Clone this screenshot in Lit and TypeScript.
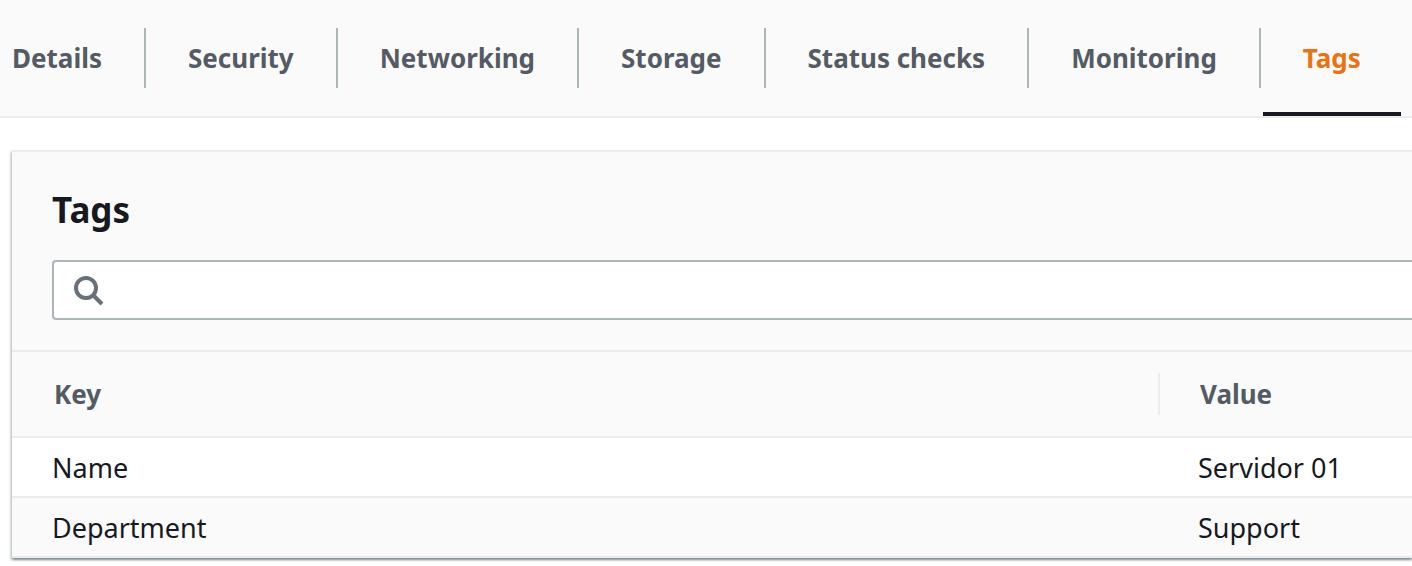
import { LitElement, html, css } from "lit";
import { customElement, state } from "lit/decorators.js";
import { classMap } from "lit/directives/class-map.js";

interface Tag {
  key: string;
  value: string;
}

const TABS = ["Details", "Security", "Networking", "Storage", "Status checks", "Monitoring", "Tags"];

const TAGS: Tag[] = [
  { key: "Name", value: "Servidor 01" },
  { key: "Department", value: "Support" },
];

@customElement("tag-table")
export class TagTable extends LitElement {
  @state() private query = "";

  static styles = css`
    :host {
      display: block;
      background: #fafafa;
      border-top: 2px solid #eaeded;
      box-shadow:
        0 2px 2px 0 rgba(0, 28, 36, 0.3),
        2px 2px 2px 0 rgba(0, 28, 36, 0.15),
        -2px 2px 2px 0 rgba(0, 28, 36, 0.15);
    }
    .header {
      padding: 34px 0 30px 40px;
    }
    .title {
      margin: 0 0 26px;
      font-size: 35px;
      line-height: 48px;
      font-weight: 700;
    }
    .search {
      display: flex;
      align-items: center;
      gap: 16px;
      height: 54px;
      padding: 2px 0 0 20px;
      border: 2px solid #aab7b8;
      border-right: 0;
      border-radius: 4px 0 0 4px;
      background: #fff;
    }
    .icon {
      flex: none;
      width: 30px;
      height: 30px;
      fill: none;
      stroke: #687078;
      stroke-width: 4;
    }
    .input {
      flex: 1;
      min-width: 0;
      height: 100%;
      padding: 0;
      border: 0;
      outline: 0;
      background: none;
      color: inherit;
      font: inherit;
    }
    .table {
      width: 100%;
      table-layout: fixed;
      border-collapse: separate;
      border-spacing: 0;
      border-top: 2px solid #eaeded;
    }
    .head,
    .cell {
      border-bottom: 2px solid #eaeded;
      text-align: left;
    }
    .head {
      height: 84px;
      padding: 0;
      color: #545b64;
      font-weight: 700;
    }
    .col-value {
      width: 254px;
    }
    .label {
      display: block;
      padding-left: 40px;
      border-left: 2px solid transparent;
      line-height: 42px;
    }
    .divided {
      border-left-color: #eaeded;
    }
    .cell {
      height: 56px;
      padding: 2px 0 0 40px;
      font-size: 27px;
      line-height: 36px;
    }
    .row {
      background: #fff;
    }
    .row:nth-child(even) {
      background: #fafafa;
    }
  `;

  render() {
    const q = this.query.toLowerCase();
    const rows = TAGS.filter((t) => `${t.key} ${t.value}`.toLowerCase().includes(q));
    return html`
      <div class="header">
        <h2 class="title">Tags</h2>
        <label class="search">
          <svg class="icon" viewBox="0 0 30 30" aria-hidden="true">
            <circle cx="12" cy="12" r="10"></circle>
            <path d="M19 19L28 28"></path>
          </svg>
          <input
            class="input"
            type="text"
            aria-label="Search tags"
            .value=${this.query}
            @input=${(e: Event) => (this.query = (e.target as HTMLInputElement).value)}
          />
        </label>
      </div>
      <table class="table">
        <thead>
          <tr>
            <th class="head" scope="col"><span class="label">Key</span></th>
            <th class="head col-value" scope="col"><span class="label divided">Value</span></th>
          </tr>
        </thead>
        <tbody>
          ${rows.map(
            (t) => html`<tr class="row">
              <td class="cell">${t.key}</td>
              <td class="cell">${t.value}</td>
            </tr>`,
          )}
        </tbody>
      </table>
    `;
  }
}

@customElement("app-root")
export class AppRoot extends LitElement {
  @state() private active = "Tags";

  static styles = css`
    :host {
      display: block;
      overflow: hidden;
      background: #fff;
      color: #16191f;
      font-family: "Noto Sans", "Open Sans", sans-serif;
      font-size: 26px;
    }
    .tabs {
      display: flex;
      padding-top: 28px;
      border-bottom: 2px solid #eaeded;
      background: #fafafa;
    }
    .item {
      display: flex;
      flex: none;
      align-items: flex-start;
      gap: 2px;
      margin-right: 2px;
    }
    .item:not(:last-child)::after {
      content: "";
      width: 2px;
      height: 60px;
      background: #aab7b8;
    }
    .tab {
      height: 88px;
      padding: 0 40px 24px;
      border: 0;
      border-bottom: 4px solid transparent;
      background: none;
      color: #545b64;
      font: inherit;
      font-weight: 700;
      line-height: 60px;
      white-space: nowrap;
      cursor: pointer;
    }
    .item:first-child .tab {
      padding-left: 12px;
    }
    .tab.active {
      border-bottom-color: #16191f;
      color: #ec7211;
    }
    .panel {
      margin: 32px 0 8px 12px;
    }
  `;

  render() {
    return html`
      <nav class="tabs" role="tablist">
        ${TABS.map(
          (t) => html`<div class="item" role="presentation">
            <button
              type="button"
              role="tab"
              aria-selected=${t === this.active}
              class=${classMap({ tab: true, active: t === this.active })}
              @click=${() => (this.active = t)}
            >
              ${t}
            </button>
          </div>`,
        )}
      </nav>
      <tag-table class="panel"></tag-table>
    `;
  }
}
